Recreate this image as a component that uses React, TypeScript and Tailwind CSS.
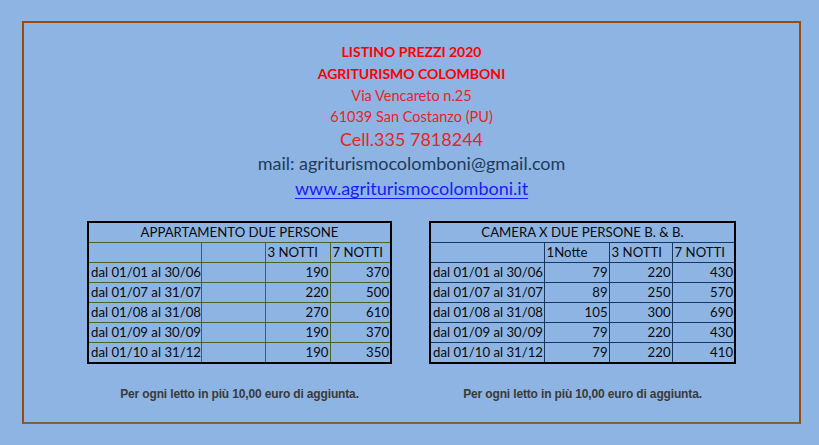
import React from "react";

const rows1 = [
  ["dal 01/01 al 30/06", "", "190", "370"],
  ["dal 01/07 al 31/07", "", "220", "500"],
  ["dal 01/08 al 31/08", "", "270", "610"],
  ["dal 01/09 al 30/09", "", "190", "370"],
  ["dal 01/10 al 31/12", "", "190", "350"],
];
const rows2 = [
  ["dal 01/01 al 30/06", "79", "220", "430"],
  ["dal 01/07 al 31/07", "89", "250", "570"],
  ["dal 01/08 al 31/08", "105", "300", "690"],
  ["dal 01/09 al 30/09", "79", "220", "430"],
  ["dal 01/10 al 31/12", "79", "220", "410"],
];

function PriceTable({
  title,
  heads,
  rows,
  widths,
  line,
}: {
  title: string;
  heads: string[];
  rows: string[][];
  widths: number[];
  line: "olive" | "navy";
}) {
  const cell =
    line === "olive"
      ? "border border-[#4f6228] h-[20px] p-0 leading-[19px]"
      : "border border-[#17375e] h-[20px] p-0 leading-[19px]";
  return (
    <table
      className="border-collapse border-2 border-black table-fixed text-[13.2px] text-[#0a0a0a]"
      style={{ width: widths.reduce((a, b) => a + b, 0) }}
    >
      <colgroup>
        {widths.map((w, i) => (
          <col key={i} style={{ width: w }} />
        ))}
      </colgroup>
      <tbody>
        <tr>
          <td colSpan={4} className={`${cell} text-center`}>
            {title}
          </td>
        </tr>
        <tr>
          {heads.map((h, i) => (
            <td key={i} className={`${cell} text-left pl-[2px] whitespace-nowrap`}>
              {h}
            </td>
          ))}
        </tr>
        {rows.map((r, ri) => (
          <tr key={ri}>
            {r.map((c, ci) => (
              <td
                key={ci}
                className={`${cell} whitespace-nowrap ${ci === 0 ? "text-left pl-[2px]" : "text-right pr-[1px]"}`}
              >
                {c}
              </td>
            ))}
          </tr>
        ))}
      </tbody>
    </table>
  );
}

const noteFont = { fontFamily: "'Liberation Sans', Arial, sans-serif" };

export default function App() {
  return (
    <div
      className="w-[819px] h-[445px] bg-[#8db4e2] pt-[21px] pl-[22px] overflow-hidden"
      style={{ fontFamily: "Lato, 'Open Sans', sans-serif" }}
    >
      <div className="w-[779px] h-[403px] border-2 border-[#9a4a0e] border-b-[#7d5f48] pt-[18px]">
        <div className="flex flex-col items-center">
          <div className="h-[22px] leading-[22px] text-[14px] font-bold text-[#ff0000]">LISTINO PREZZI 2020</div>
          <div className="h-[22px] leading-[22px] text-[14px] font-bold text-[#ff0000]">AGRITURISMO COLOMBONI</div>
          <div className="h-[21px] leading-[21px] text-[14.5px] text-[#e8232a]">Via Vencareto n.25</div>
          <div className="h-[21px] leading-[21px] text-[14.5px] text-[#e8232a]">61039 San Costanzo (PU)</div>
          <div className="h-[24px] leading-[24px] text-[18px] text-[#e8232a]">Cell.335 7818244</div>
          <div className="h-[25px] leading-[25px] text-[18px] text-[#1f3b5c]">mail: agriturismocolomboni@gmail.com</div>
          <div className="h-[24px] leading-[24px] text-[18px] text-[#1a1aff] underline underline-offset-[3px]">
            www.agriturismocolomboni.it
          </div>
        </div>
        <div className="flex pl-[63px] gap-[37px] mt-[21px]">
          <div className="flex flex-col items-center">
            <PriceTable
              title="APPARTAMENTO DUE PERSONE"
              heads={["", "", "3 NOTTI", "7 NOTTI"]}
              rows={rows1}
              widths={[113, 64, 65, 61]}
              line="olive"
            />
            <div className="mt-[21px] text-[12px] font-bold tracking-[-0.15px] text-[#3a3a3a]" style={noteFont}>
              Per ogni letto in più 10,00 euro di aggiunta.
            </div>
          </div>
          <div className="flex flex-col items-center">
            <PriceTable
              title="CAMERA X DUE PERSONE B. & B."
              heads={["", "1Notte", "3 NOTTI", "7 NOTTI"]}
              rows={rows2}
              widths={[114, 65, 63, 63]}
              line="navy"
            />
            <div className="mt-[21px] text-[12px] font-bold tracking-[-0.15px] text-[#3a3a3a]" style={noteFont}>
              Per ogni letto in più 10,00 euro di aggiunta.
            </div>
          </div>
        </div>
      </div>
    </div>
  );
}
